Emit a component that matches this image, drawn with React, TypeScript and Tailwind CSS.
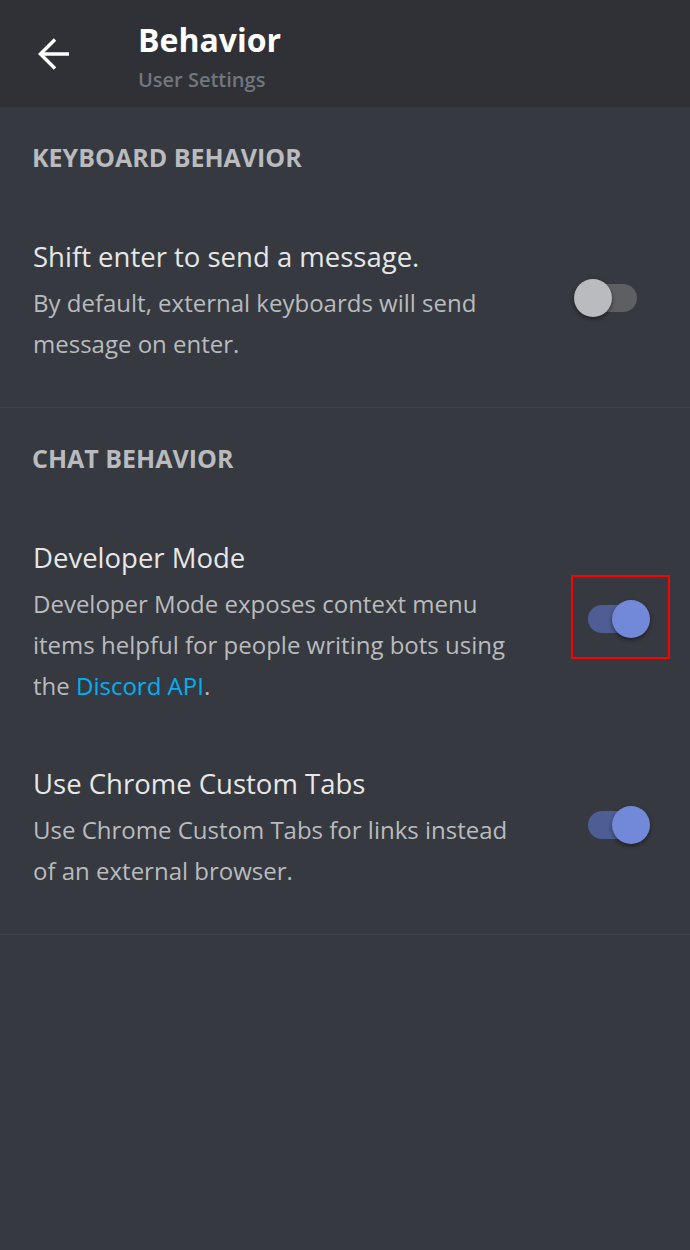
import React from "react";

const font = { fontFamily: "'Open Sans', 'Noto Sans', sans-serif" };

function Toggle({ on, highlight }: { on: boolean; highlight?: boolean }) {
  return (
    <div className="relative w-[77px] h-[38px] shrink-0 mb-[8px]">
      <div
        className={`absolute left-[14px] top-[5px] w-[49px] h-[28px] rounded-full ${
          on ? "bg-[#4e5d94]" : "bg-[#5d5f63]"
        }`}
      />
      <div
        className={`absolute top-0 w-[38px] h-[38px] rounded-full shadow-[0_2px_4px_rgba(0,0,0,0.45)] ${
          on ? "left-[38px] bg-[#7289da]" : "left-0 bg-[#b9bbbe]"
        }`}
      />
      {highlight && (
        <div className="absolute left-[-3px] top-[-25px] w-[99px] h-[84px] border-2 border-[#ff0000]" />
      )}
    </div>
  );
}

function Row({
  title,
  children,
  on,
  highlight,
}: {
  title: string;
  children: React.ReactNode;
  on: boolean;
  highlight?: boolean;
}) {
  return (
    <div className="flex items-center py-[30px] pl-[33px] pr-[39px]">
      <div className="flex-1">
        <div className="text-[27.5px] leading-[36px] text-[#e6e7e8]">{title}</div>
        <div className="mt-[7px] text-[24px] leading-[41px] text-[#b9bbbe]">{children}</div>
      </div>
      <Toggle on={on} highlight={highlight} />
    </div>
  );
}

function SectionHeader({ children }: { children: React.ReactNode }) {
  return (
    <div className="pt-[36px] mb-[38px] px-[32px] text-[25px] leading-[28px] font-bold text-[#b9bbbe] uppercase">
      {children}
    </div>
  );
}

export default function App() {
  return (
    <div className="w-[690px] h-[1250px] bg-[#36393f] overflow-hidden" style={font}>
      <div className="h-[107px] bg-[#2f3136] flex items-center">
        <div className="w-[138px] pl-[36px]">
          <svg width="36" height="34" viewBox="0 0 36 34" fill="none" stroke="#ffffff" strokeWidth="3.5">
            <path d="M4 17 H33" />
            <path d="M19 2.5 L4.5 17 L19 31.5" strokeLinejoin="miter" />
          </svg>
        </div>
        <div className="flex flex-col mt-[6px]">
          <div className="text-[32px] leading-[40px] font-bold text-white">Behavior</div>
          <div className="text-[20px] leading-[28px] font-semibold text-[#72767d] mt-[6px]">User Settings</div>
        </div>
      </div>

      <div className="border-b border-[#40434a] pb-[13px]">
        <SectionHeader>Keyboard Behavior</SectionHeader>
        <Row title="Shift enter to send a message." on={false}>
          By default, external keyboards will send
          <br />
          message on enter.
        </Row>
      </div>

      <div className="border-b border-[#40434a] pb-[13px]">
        <SectionHeader>Chat Behavior</SectionHeader>
        <Row title="Developer Mode" on={true} highlight>
          Developer Mode exposes context menu
          <br />
          items helpful for people writing bots using
          <br />
          the <span className="text-[#00b0f4]">Discord API</span>.
        </Row>
        <Row title="Use Chrome Custom Tabs" on={true}>
          Use Chrome Custom Tabs for links instead
          <br />
          of an external browser.
        </Row>
      </div>
    </div>
  );
}
